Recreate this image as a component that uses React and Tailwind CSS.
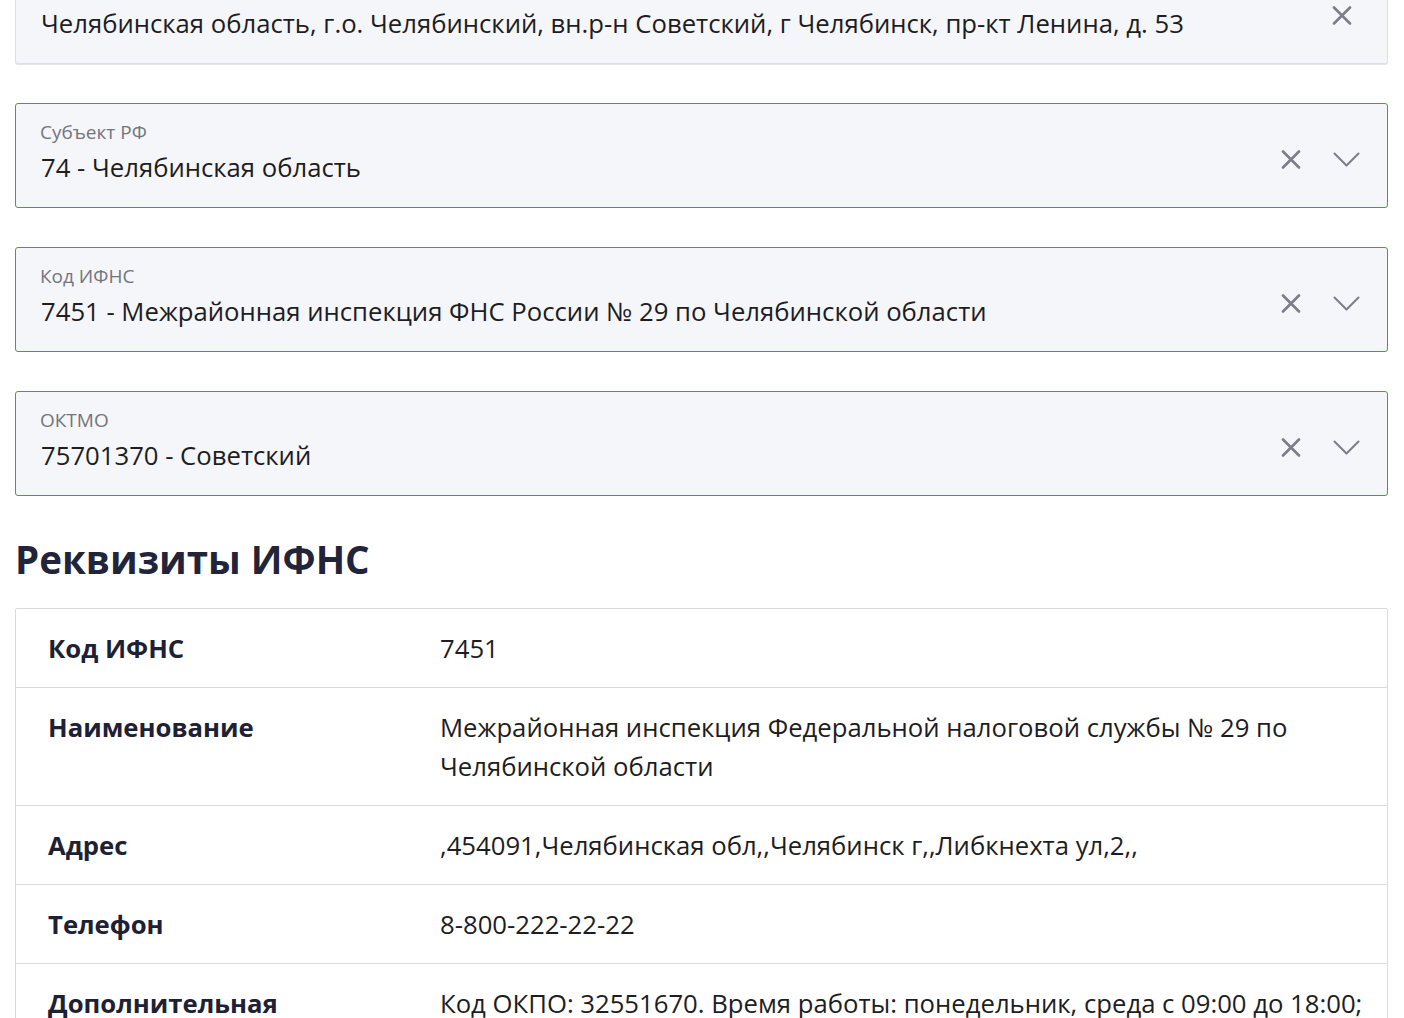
import React from 'react'

const ClearIcon = () => (
  <svg width="20" height="19" viewBox="0 0 20 19" fill="none">
    <path d="M2 1.5L18 17.5M18 1.5L2 17.5" stroke="#7b7e86" strokeWidth="2.6" strokeLinecap="round" />
  </svg>
)

const ChevronIcon = () => (
  <svg width="27" height="15" viewBox="0 0 27 15" fill="none">
    <path d="M1.5 1.5L13.5 13.5L25.5 1.5" stroke="#7b7e86" strokeWidth="2" strokeLinecap="round" strokeLinejoin="round" />
  </svg>
)

const fields = [
  {
    label: 'Адрес',
    value: 'Челябинская область, г.о. Челябинский, вн.р-н Советский, г Челябинск, пр-кт Ленина, д. 53',
    select: false,
  },
  { label: 'Субъект РФ', value: '74 - Челябинская область', select: true },
  {
    label: 'Код ИФНС',
    value: '7451 - Межрайонная инспекция ФНС России № 29 по Челябинской области',
    select: true,
  },
  { label: 'ОКТМО', value: '75701370 - Советский', select: true },
]

const rows = [
  { name: 'Код ИФНС', value: '7451' },
  {
    name: 'Наименование',
    value: 'Межрайонная инспекция Федеральной налоговой службы № 29 по Челябинской области',
  },
  { name: 'Адрес', value: ',454091,Челябинская обл,,Челябинск г,,Либкнехта ул,2,,' },
  { name: 'Телефон', value: '8-800-222-22-22' },
  {
    name: 'Дополнительная информация',
    value:
      'Код ОКПО: 32551670. Время работы: понедельник, среда с 09:00 до 18:00; вторник, четверг с 09:00 до 20:00; пятница с 09:00 до 16:45',
  },
]

// green frame for filled selects, grey for the plain address input
const selectBox =
  'h-[105px] flex items-start justify-between rounded-[3px] border border-solid border-[#3aa63f] bg-[#f5f6fa] pl-6 pr-[27px]'
const inputBox =
  'h-[105px] flex items-start justify-between rounded-[3px] border border-solid border-[#dcdfe5] bg-[#f5f6fa] pl-6 pr-[35px] shadow-[0_1px_0_#e3e5ea]'

const Field = ({ field }) => (
  <div className={field.select ? selectBox : inputBox}>
    <div className="flex flex-col pt-[14px] min-w-0">
      <div className="text-[19px] leading-[28px] text-[#72757e]">{field.label}</div>
      <div className="mt-[2px] text-[25.7px] leading-[39px] text-[#1d1d22] pl-[1px] whitespace-nowrap">
        {field.value}
      </div>
    </div>
    <div className="self-center mt-[7px] flex items-center gap-[32px]">
      <ClearIcon />
      {field.select && <ChevronIcon />}
    </div>
  </div>
)

const App = () => {
  return (
    <div className="min-h-screen bg-white overflow-hidden" style={{ fontFamily: '"Open Sans", "Noto Sans", sans-serif' }}>
      <div className="pl-[15px] pr-[16px] -mt-[41px]">
        <div className="flex flex-col gap-[39px]">
          {fields.map((field) => (
            <Field key={field.label} field={field} />
          ))}
        </div>
        <h2 className="mt-[39px] mb-[24px] text-[38.5px] leading-[49px] font-bold text-[#22253a]">
          Реквизиты ИФНС
        </h2>
        <div className="border border-solid border-[#dadada] rounded-[2px]">
          {rows.map((row, i) => (
            <div
              key={row.name}
              className={i > 0 ? 'flex pl-8 pr-4 py-[19.5px] text-[25.7px] leading-[39px] border-t border-solid border-[#dadada]' : 'flex pl-8 pr-4 py-[19.5px] text-[25.7px] leading-[39px]'}
            >
              <div className="w-[392px] shrink-0 font-bold text-[#1e2033]">{row.name}</div>
              <div className="flex-1 text-[#1d1d22]">{row.value}</div>
            </div>
          ))}
        </div>
      </div>
    </div>
  )
}

export default App
